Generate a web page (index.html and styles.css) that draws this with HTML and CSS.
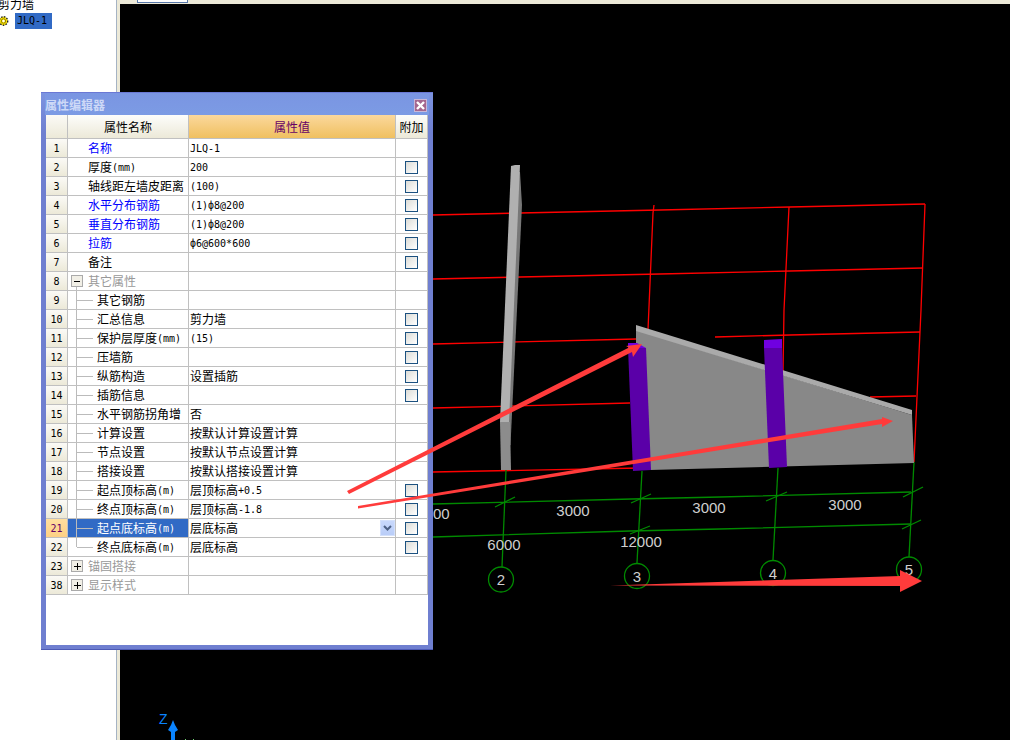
FILE: index.html
```html
<!DOCTYPE html>
<html lang="zh">
<head>
<meta charset="utf-8">
<title>属性编辑器</title>
<link rel="stylesheet" href="styles.css">
</head>
<body>
<div class="app">
  <aside class="side">
    <div class="tree-root">剪力墙</div>
    <div class="tree-item">
      <svg class="gear" width="10" height="12" viewBox="0 0 10 12"><circle cx="3.5" cy="6" r="4.2" fill="#ffe800" stroke="#222" stroke-width="1.4" stroke-dasharray="1.6 1.2"/><circle cx="3.5" cy="6" r="2.2" fill="none" stroke="#7a6a00" stroke-width=".8"/><circle cx="3.5" cy="6" r="1.2" fill="#fff"/></svg>
      <span class="item-label lat">JLQ-1</span>
    </div>
  </aside>
  <div class="splitter"></div>
  <main class="work">
    <div class="topstrip"><span class="tab"></span></div>
    <svg class="scene" width="890" height="736" viewBox="120 4 890 736">
      <g class="red">
        <polyline points="433,215 520,213 660,210 790,207 925,204"/>
        <polyline points="433,279 520,277 660,274 790,271 923,268"/>
        <polyline points="433,344 636,339"/>
        <polyline points="715,337 790,335 920,332"/>
        <polyline points="433,408 630,403"/>
        <polyline points="870,397 916,396"/>
        <polyline points="433,472 640,468"/>
        <polyline points="654,205 653,213 648,330"/>
        <polyline points="789,207 784,310 783,372"/>
        <polyline points="925,204 921,310 914,462"/>
      </g>
      <g class="green">
        <polyline points="433,504 632,499 720,497 911,492"/>
        <polyline points="433,537 630,531 720,529 911,524"/>
        <polyline points="506,470 502,567"/>
        <polyline points="642,471 637,563"/>
        <polyline points="778,468 773,560"/>
        <polyline points="914,462 909,557"/>
        <line x1="495" y1="507" x2="515" y2="497"/>
        <line x1="631" y1="503" x2="651" y2="494"/>
        <line x1="630" y1="534" x2="650" y2="526"/>
        <line x1="766" y1="501" x2="787" y2="492"/>
        <line x1="903" y1="497" x2="923" y2="487"/>
        <line x1="902" y1="529" x2="921" y2="520"/>
        <circle cx="501" cy="579.5" r="12.5"/>
        <circle cx="637" cy="576" r="12.5"/>
        <circle cx="773" cy="573" r="12.5"/>
        <circle cx="909" cy="569.5" r="12.5"/>
      </g>
      <polygon class="wall-dark" points="518,172 520,172 522,205 510.5,445 505,445"/>
      <polygon class="wall-pale" points="511,166 515,165 520,165 509,422 500,422"/>
      <polygon class="wall-low" points="500,422 510,422 511,470 501,470"/>
      <polygon class="wall-main" points="636,330 912,415 914,463 650,470 636,400"/>
      <polygon class="wall-light" points="636,325 912,410 912,415 636,331"/>
      <polygon class="col-top" points="628,343 637,343 646,348 628,348"/>
      <polygon class="col-main" points="628,348 646,348 651,470 633,471"/>
      <polygon class="col-top" points="764,340 782,339 782,348 764,348"/>
      <polygon class="col-main" points="764,348 782,348 787,467 769,468"/>
      <g class="labels">
        <text x="433" y="519" text-anchor="middle">3000</text>
        <text x="573" y="516" text-anchor="middle">3000</text>
        <text x="709" y="513" text-anchor="middle">3000</text>
        <text x="845" y="510" text-anchor="middle">3000</text>
        <text x="504" y="550" text-anchor="middle">6000</text>
        <text x="641" y="547" text-anchor="middle">12000</text>
        <text x="501" y="585" text-anchor="middle">2</text>
        <text x="637" y="582" text-anchor="middle">3</text>
        <text x="773" y="579" text-anchor="middle">4</text>
        <text x="909" y="575" text-anchor="middle">5</text>
      </g>
      <text class="axis" x="159" y="724">Z</text>
      <polygon class="axis-shape" points="173,720 175,725 178,730 175,732 175,740 171,740 171,732 168,730 171,725"/>
      <rect class="speck" x="185" y="739" width="1" height="1"/>
      <rect class="speck" x="193" y="739" width="1" height="1"/>
    </svg>
  </main>

  <section class="dialog">
    <header class="dialog-title">
      <span>属性编辑器</span>
      <span class="close"><svg width="11" height="11" viewBox="0 0 11 11"><path d="M2 2 9 9M9 2 2 9" stroke="#fff" stroke-width="2.4"/></svg></span>
    </header>
    <div class="grid">
      <div class="row head">
        <div class="cell num"></div>
        <div class="cell hname">属性名称</div>
        <div class="cell hval">属性值</div>
        <div class="cell hadd">附加</div>
      </div>
      <div class="row"><div class="cell num">1</div><div class="cell name link">名称</div><div class="cell val"><span class="lat">JLQ-1</span></div><div class="cell add"></div></div>
      <div class="row"><div class="cell num">2</div><div class="cell name">厚度<span class="lat">(mm)</span></div><div class="cell val"><span class="lat">200</span></div><div class="cell add"><span class="chk"></span></div></div>
      <div class="row"><div class="cell num">3</div><div class="cell name">轴线距左墙皮距离</div><div class="cell val"><span class="lat">(100)</span></div><div class="cell add"><span class="chk"></span></div></div>
      <div class="row"><div class="cell num">4</div><div class="cell name link">水平分布钢筋</div><div class="cell val"><span class="lat">(1)ф8@200</span></div><div class="cell add"><span class="chk"></span></div></div>
      <div class="row"><div class="cell num">5</div><div class="cell name link">垂直分布钢筋</div><div class="cell val"><span class="lat">(1)ф8@200</span></div><div class="cell add"><span class="chk"></span></div></div>
      <div class="row"><div class="cell num">6</div><div class="cell name link">拉筋</div><div class="cell val"><span class="lat">ф6@600*600</span></div><div class="cell add"><span class="chk"></span></div></div>
      <div class="row"><div class="cell num">7</div><div class="cell name">备注</div><div class="cell val"></div><div class="cell add"><span class="chk"></span></div></div>
      <div class="row"><div class="cell num">8</div><div class="cell group open"><svg class="box" width="12" height="12" viewBox="0 0 12 12"><rect x=".5" y=".5" width="11" height="11" fill="#f1efe6" stroke="#aaa"/><path d="M3 6.5H9" stroke="#000"/></svg>其它属性</div><div class="cell val"></div><div class="cell add"></div></div>
      <div class="row"><div class="cell num">9</div><div class="cell name tree">其它钢筋</div><div class="cell val"></div><div class="cell add"></div></div>
      <div class="row"><div class="cell num">10</div><div class="cell name tree">汇总信息</div><div class="cell val">剪力墙</div><div class="cell add"><span class="chk"></span></div></div>
      <div class="row"><div class="cell num">11</div><div class="cell name tree">保护层厚度<span class="lat">(mm)</span></div><div class="cell val"><span class="lat">(15)</span></div><div class="cell add"><span class="chk"></span></div></div>
      <div class="row"><div class="cell num">12</div><div class="cell name tree">压墙筋</div><div class="cell val"></div><div class="cell add"><span class="chk"></span></div></div>
      <div class="row"><div class="cell num">13</div><div class="cell name tree">纵筋构造</div><div class="cell val">设置插筋</div><div class="cell add"><span class="chk"></span></div></div>
      <div class="row"><div class="cell num">14</div><div class="cell name tree">插筋信息</div><div class="cell val"></div><div class="cell add"><span class="chk"></span></div></div>
      <div class="row"><div class="cell num">15</div><div class="cell name tree">水平钢筋拐角增</div><div class="cell val">否</div><div class="cell add"></div></div>
      <div class="row"><div class="cell num">16</div><div class="cell name tree">计算设置</div><div class="cell val">按默认计算设置计算</div><div class="cell add"></div></div>
      <div class="row"><div class="cell num">17</div><div class="cell name tree">节点设置</div><div class="cell val">按默认节点设置计算</div><div class="cell add"></div></div>
      <div class="row"><div class="cell num">18</div><div class="cell name tree">搭接设置</div><div class="cell val">按默认搭接设置计算</div><div class="cell add"></div></div>
      <div class="row"><div class="cell num">19</div><div class="cell name tree">起点顶标高<span class="lat">(m)</span></div><div class="cell val">层顶标高<span class="lat">+0.5</span></div><div class="cell add"><span class="chk"></span></div></div>
      <div class="row"><div class="cell num">20</div><div class="cell name tree">终点顶标高<span class="lat">(m)</span></div><div class="cell val">层顶标高<span class="lat">-1.8</span></div><div class="cell add"><span class="chk"></span></div></div>
      <div class="row current"><div class="cell num">21</div><div class="cell name tree">起点底标高<span class="lat">(m)</span></div><div class="cell val with-drop">层底标高<span class="drop"><svg width="9" height="6" viewBox="0 0 9 6"><path d="M1 1 4.5 4.5 8 1" fill="none" stroke="#4d6185" stroke-width="2"/></svg></span></div><div class="cell add"><span class="chk"></span></div></div>
      <div class="row"><div class="cell num">22</div><div class="cell name tree last">终点底标高<span class="lat">(m)</span></div><div class="cell val">层底标高</div><div class="cell add"><span class="chk"></span></div></div>
      <div class="row"><div class="cell num">23</div><div class="cell group"><svg class="box" width="12" height="12" viewBox="0 0 12 12"><rect x=".5" y=".5" width="11" height="11" fill="#f1efe6" stroke="#aaa"/><path d="M3 6.5H10M6.5 3V10" stroke="#000"/></svg>锚固搭接</div><div class="cell val"></div><div class="cell add"></div></div>
      <div class="row"><div class="cell num">38</div><div class="cell group"><svg class="box" width="12" height="12" viewBox="0 0 12 12"><rect x=".5" y=".5" width="11" height="11" fill="#f1efe6" stroke="#aaa"/><path d="M3 6.5H10M6.5 3V10" stroke="#000"/></svg>显示样式</div><div class="cell val"></div><div class="cell add"></div></div>
    </div>
  </section>

  <svg class="annot" width="1010" height="740" viewBox="0 0 1010 740">
    <polygon points="347,491 629,347.5 626,346 642,344 633,357 632,352 349,494"/>
    <polygon points="358,506 882,419 882,417 893,421 882,427 882,424 358,508.5"/>
    <polygon points="610,585.5 900,576 900,570 922,581 900,592 900,586"/>
  </svg>
</div>
</body>
</html>
```
FILE: styles.css
```css
* { box-sizing: border-box; }
html, body { margin: 0; height: 100%; background: #000; overflow: hidden; }
body { font: 12px/18px "Noto Sans CJK SC", "Liberation Sans", sans-serif; color: #000; }
.lat { font-family: "DejaVu Sans Mono", monospace; font-size: 10px; padding-top: 1px; }

.app { position: relative; display: flex; width: 1010px; height: 740px; }

.side { width: 116px; background: #fff; overflow: hidden; flex: none; }
.tree-root { margin: -5px 0 0 -2px; height: 18px; line-height: 18px; }
.tree-item { display: flex; align-items: center; height: 16px; }
.gear { margin: 0 5px 0 0; flex: none; }
.item-label { background: #316ac5; height: 16px; line-height: 16px; width: 37px; padding: 0 0 0 2px; }
.splitter { width: 4px; flex: none; background: #ece9d8; border-left: 1px solid #a5b3c4; }

.work { flex: 1; display: flex; flex-direction: column; min-width: 0; }
.topstrip { height: 4px; background: #ece9d8; padding-left: 17px; flex: none; }
.tab { display: block; width: 51px; height: 3px; background: #fff; border: 1px solid #5878aa; border-top: 0; }
.scene { display: block; flex: none; background: #000; }

.red polyline { fill: none; stroke: #ff0000; stroke-width: 1.3; }
.green polyline, .green line, .green circle { fill: none; stroke: #008a00; stroke-width: 1.3; }
.wall-pale { fill: #b0b0b0; }
.wall-light { fill: #aaaaaa; }
.wall-dark { fill: #777777; }
.wall-low { fill: #8c8c8c; }
.wall-main { fill: #888888; }
.col-top { fill: #7000e0; }
.col-main { fill: #5a00a8; }
.labels text { font: 15px "Liberation Sans", sans-serif; fill: #cfcfcf; }
.axis { font: 14px "Liberation Sans", sans-serif; fill: #0a84ff; }
.axis-shape { fill: #0a84ff; }
.speck { fill: #6fd06f; }

.annot { position: absolute; left: 0; top: 0; pointer-events: none; }
.annot polygon { fill: #ff3b3b; }

.dialog {
  position: absolute; left: 41px; top: 92px; width: 392px; height: 558px;
  padding: 0 5px 4px; background: linear-gradient(#7c93e0, #6f7fd0 40px);
  border: 1px solid #6a78d4; border-width: 1px 0 1px 0; border-bottom-color: #4d5ab5;
  display: flex; flex-direction: column;
}
.dialog-title {
  height: 22px; flex: none; display: flex; align-items: center; justify-content: space-between;
  margin: 0 -1px; padding: 2px 0 0; color: #cdd9f7; font-weight: 700;
  background: linear-gradient(#7a95e2, #7c9be4);
}
.close {
  width: 13px; height: 13px; background: #a5678f; border: 1px solid #c9b8d8;
  display: flex; align-items: center; justify-content: center; margin-right: 2px;
}
.grid { flex: 1; background: #fff; min-height: 0; }
.row { display: grid; grid-template-columns: 22px 121px 207px 32px; height: 19px; }
.row.head { height: 24px; }
.cell { border-right: 1px solid #c0c0c0; border-bottom: 1px solid #c0c0c0; display: flex; align-items: center; white-space: nowrap; overflow: hidden; }
.num { justify-content: center; padding-top: 1px; background: linear-gradient(#fbfaf6, #ece9d8); font-family: "DejaVu Sans Mono", monospace; font-size: 10px; }
.hname, .hval, .hadd { justify-content: center; }
.hname { background: linear-gradient(#fdfdfb, #ece9d8); }
.hval { background: linear-gradient(#fbd89c, #f0c060); color: #660066; }
.hadd { background: linear-gradient(#fdfdfb, #ece9d8); }
.name { padding-left: 20px; }
.link { color: #0000ff; }
.val { padding-left: 1px; }
.add { justify-content: center; }
.chk { width: 13px; height: 13px; border: 1px solid #1c5180; background: linear-gradient(135deg, #dcdcd7, #fff); }
.group { padding-left: 3px; color: #999; }
.box { margin-right: 5px; flex: none; }
.group.open { background: linear-gradient(#bbb, #bbb) 8px 100% / 1px 3px no-repeat; }
.tree {
  padding-left: 29px;
  background:
    linear-gradient(#bbb, #bbb) 8px 0 / 1px 100% no-repeat,
    linear-gradient(#bbb, #bbb) 9px 50% / 16px 1px no-repeat;
}
.tree.last {
  background:
    linear-gradient(#bbb, #bbb) 8px 0 / 1px 50% no-repeat,
    linear-gradient(#bbb, #bbb) 9px 50% / 16px 1px no-repeat;
}
.current .num { background: linear-gradient(#ffdf9f, #fdd085); color: #660066; }
.current .tree { background-color: #316ac5; color: #fff; }
.with-drop { justify-content: space-between; }
.drop { width: 15px; height: 16px; display: flex; align-items: center; justify-content: center; background: linear-gradient(#c8d8fb, #b9cdf8); border: 1px solid #d3e0fb; }
```
